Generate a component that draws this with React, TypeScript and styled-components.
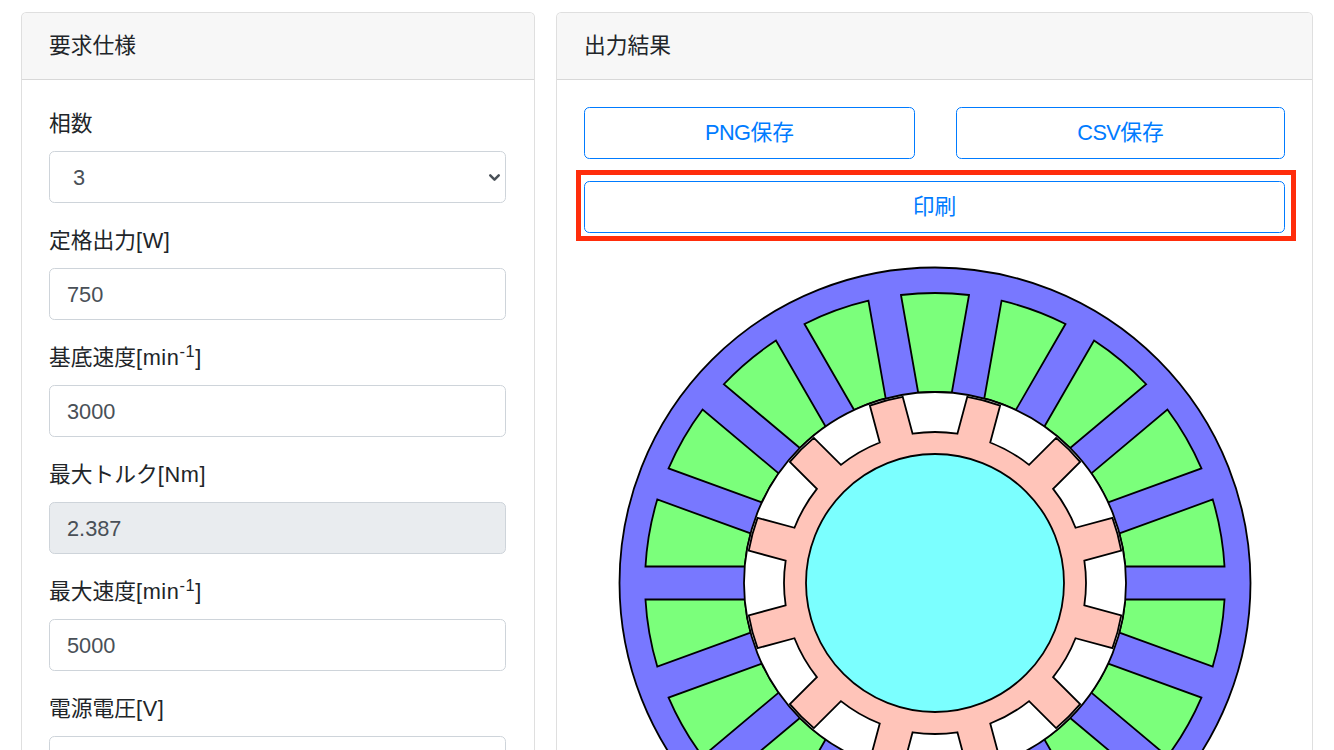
import styled, { createGlobalStyle } from "styled-components";
import { ChevronDown } from "lucide-react";

const GlobalStyle = createGlobalStyle`
  html, body {
    margin: 0;
    padding: 0;
    height: 750px;
    overflow: hidden;
    background: #fff;
  }
  * { box-sizing: border-box; }
`;

const fontStack = `"Liberation Sans", "Noto Sans CJK JP", sans-serif`;

const Page = styled.div`
  display: grid;
  grid-template-columns: 514px 757px;
  gap: 21px;
  padding: 12px 21px 0;
  height: 750px;
  overflow: hidden;
  font-family: ${fontStack};
  font-size: 21.76px;
  line-height: 1.5;
  color: #212529;
`;

const Card = styled.section`
  border: 1px solid rgba(0, 0, 0, 0.125);
  border-radius: 5.4px;
  min-height: 900px;
  background: #fff;
`;

const CardHeader = styled.header`
  height: 67px;
  padding: 17px 27px 0;
  background: #f7f7f7;
  border-bottom: 1px solid rgba(0, 0, 0, 0.125);
  border-radius: 4.4px 4.4px 0 0;
`;

const CardBody = styled.div`
  padding: 27px;
`;

const FormGroup = styled.div`
  margin: 0 1px 21px 0;
  position: relative;
`;

const Label = styled.label`
  display: block;
  height: 33px;
  margin-bottom: 11px;
  line-height: 34px;

  sup {
    font-size: 75%;
    line-height: 0;
    position: relative;
    top: -0.5em;
    vertical-align: baseline;
  }
`;

const Unit = styled.span`
  letter-spacing: 0.6px;
`;

const Input = styled.input<{ $disabled?: boolean }>`
  display: block;
  width: 100%;
  height: 52px;
  padding: 2px 17px 0;
  border: 1px solid #ced4da;
  border-radius: 5.4px;
  background: ${({ $disabled }) => ($disabled ? "#e9ecef" : "#fff")};
  color: #495057;
  font: inherit;
  outline: none;
`;

const Select = styled.select`
  display: block;
  width: 100%;
  height: 52px;
  padding: 2px 17px 0 23px;
  border: 1px solid #ced4da;
  border-radius: 5.4px;
  background: #fff;
  color: #495057;
  font: inherit;
  appearance: none;
  outline: none;
`;

const SelectArrow = styled(ChevronDown)`
  position: absolute;
  right: 3px;
  bottom: 17px;
  color: #495057;
  pointer-events: none;
`;

const ButtonRow = styled.div`
  display: grid;
  grid-template-columns: 331px 329px;
  gap: 41px;
  margin-bottom: 22px;
`;

const OutlineButton = styled.button`
  display: block;
  width: 100%;
  height: 52px;
  padding: 1px 0 0;
  border: 1px solid #007bff;
  border-radius: 5.4px;
  background: #fff;
  color: #007bff;
  font: inherit;
`;

const ButtonLatin = styled.span`
  letter-spacing: -0.6px;
`;

const Highlighted = styled.div`
  position: relative;
`;

const HighlightBox = styled.div`
  position: absolute;
  top: -11px;
  right: -11px;
  bottom: -8px;
  left: -8px;
  border: 5px solid #ff2d0b;
  pointer-events: none;
`;

const MotorWrap = styled.div`
  display: flex;
  justify-content: center;
  margin-top: 33px;
`;

const R_OUTER = 315.5;
const R_STATOR_SLOT = 290;
const R_STATOR_IN = 191;
const R_ROTOR = 189;
const R_ROTOR_YOKE = 151;
const R_SHAFT = 129;
const STATOR_TOOTH = 16.5;
const ROTOR_TOOTH = 17;
const C = 317;

// math angle in degrees, y is flipped for svg
const pt = (r: number, deg: number) => {
  const a = (deg * Math.PI) / 180;
  return `${(C + r * Math.cos(a)).toFixed(2)} ${(C - r * Math.sin(a)).toFixed(2)}`;
};
const offset = (w: number, r: number) => (Math.asin(w / r) * 180) / Math.PI;

function statorSlot(center: number) {
  const lo = center - 10;
  const hi = center + 10;
  const oo = offset(STATOR_TOOTH, R_STATOR_SLOT);
  const oi = offset(STATOR_TOOTH, R_STATOR_IN);
  return [
    `M${pt(R_STATOR_IN, hi - oi)}`,
    `L${pt(R_STATOR_SLOT, hi - oo)}`,
    `A${R_STATOR_SLOT} ${R_STATOR_SLOT} 0 0 1 ${pt(R_STATOR_SLOT, lo + oo)}`,
    `L${pt(R_STATOR_IN, lo + oi)}`,
    `A${R_STATOR_IN} ${R_STATOR_IN} 0 0 0 ${pt(R_STATOR_IN, hi - oi)}`,
    "Z",
  ].join(" ");
}

function rotorPath() {
  const tip = offset(ROTOR_TOOTH, R_ROTOR);
  const root = offset(ROTOR_TOOTH, R_ROTOR_YOKE);
  let d = "";
  for (let k = 0; k < 12; k++) {
    const t = 15 + k * 30;
    d += `${k === 0 ? "M" : "L"}${pt(R_ROTOR_YOKE, t - root)} `;
    d += `L${pt(R_ROTOR, t - tip)} `;
    d += `A${R_ROTOR} ${R_ROTOR} 0 0 0 ${pt(R_ROTOR, t + tip)} `;
    d += `L${pt(R_ROTOR_YOKE, t + root)} `;
    d += `A${R_ROTOR_YOKE} ${R_ROTOR_YOKE} 0 0 0 ${pt(R_ROTOR_YOKE, t + 30 - root)} `;
  }
  return d + "Z";
}

const slots = Array.from({ length: 18 }, (_, i) => 90 + i * 20);

function Motor() {
  return (
    <svg width={634} height={634} viewBox="0 0 634 634" style={{ flex: "none" }}>
      <g stroke="#000" strokeWidth={1.8}>
        <circle cx={C} cy={C} r={R_OUTER} fill="#7878ff" />
        {slots.map((a) => (
          <path key={a} d={statorSlot(a)} fill="#7bff7b" />
        ))}
        <circle cx={C} cy={C} r={R_STATOR_IN} fill="#fff" />
        <path d={rotorPath()} fill="#ffc4b9" />
        <circle cx={C} cy={C} r={R_SHAFT} fill="#7bffff" />
      </g>
    </svg>
  );
}

const fields = [
  { label: <>定格出力<Unit>[W]</Unit></>, value: "750" },
  { label: <>基底速度<Unit>[min<sup>-1</sup>]</Unit></>, value: "3000" },
  { label: <>最大トルク<Unit>[Nm]</Unit></>, value: "2.387", disabled: true },
  { label: <>最大速度<Unit>[min<sup>-1</sup>]</Unit></>, value: "5000" },
  { label: <>電源電圧<Unit>[V]</Unit></>, value: "" },
];

export default function App() {
  return (
    <>
      <GlobalStyle />
      <Page>
        <Card>
          <CardHeader>要求仕様</CardHeader>
          <CardBody>
            <FormGroup>
              <Label>相数</Label>
              <Select defaultValue="3">
                <option value="1">1</option>
                <option value="3">3</option>
              </Select>
              <SelectArrow size={17} strokeWidth={3.5} />
            </FormGroup>
            {fields.map((f, i) => (
              <FormGroup key={i}>
                <Label>{f.label}</Label>
                <Input defaultValue={f.value} readOnly $disabled={f.disabled} />
              </FormGroup>
            ))}
          </CardBody>
        </Card>
        <Card>
          <CardHeader>出力結果</CardHeader>
          <CardBody>
            <ButtonRow>
              <OutlineButton><ButtonLatin>PNG</ButtonLatin>保存</OutlineButton>
              <OutlineButton><ButtonLatin>CSV</ButtonLatin>保存</OutlineButton>
            </ButtonRow>
            <Highlighted>
              <OutlineButton>印刷</OutlineButton>
              <HighlightBox />
            </Highlighted>
            <MotorWrap>
              <Motor />
            </MotorWrap>
          </CardBody>
        </Card>
      </Page>
    </>
  );
}
